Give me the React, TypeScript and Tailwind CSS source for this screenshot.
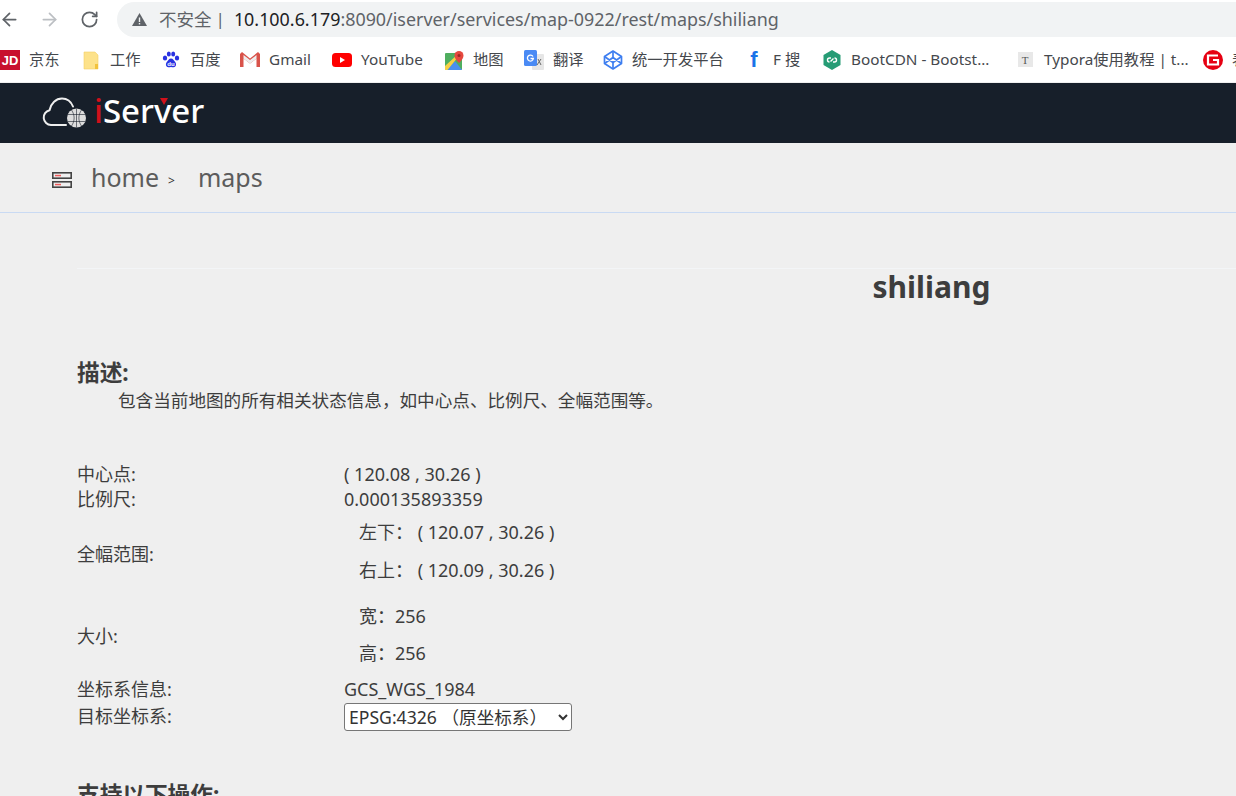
import { ArrowLeft, ArrowRight, RotateCw } from "lucide-react";
import type { ReactNode } from "react";

const font = "font-['Noto_Sans','Noto_Sans_CJK_SC',sans-serif]";

function Bookmark({ icon, label, className }: { icon: ReactNode; label: string; className: string }) {
  return (
    <div className={`flex shrink-0 items-center whitespace-nowrap ${className}`}>
      <span className="flex w-[20px] shrink-0 items-center justify-center">{icon}</span>
      <span className="ml-[9px] text-[15.3px] leading-none text-[#45484d]">{label}</span>
    </div>
  );
}

function BookmarksBar() {
  return (
    <div className="flex h-[44px] items-center overflow-hidden bg-white">
      <Bookmark
        className="w-[81px]"
        label="京东"
        icon={
          <span className="flex h-[20px] w-[20px] items-center justify-center bg-[#c8102e] font-['Liberation_Sans',sans-serif] text-[13px] font-bold leading-none text-white">
            JD
          </span>
        }
      />
      <Bookmark
        className="w-[80px]"
        label="工作"
        icon={
          <svg width="16" height="19" viewBox="0 0 16 19">
            <path d="M1 1h11l3 3v14H1z" fill="#fde28a" stroke="#f5d264" strokeWidth="0.6" />
            <rect x="12" y="13" width="3" height="5" fill="#f2c23c" />
          </svg>
        }
      />
      <Bookmark
        className="w-[79px]"
        label="百度"
        icon={
          <svg width="18" height="18" viewBox="0 0 18 18" fill="#2932e1">
            <ellipse cx="3" cy="7" rx="2.2" ry="2.6" />
            <ellipse cx="6.8" cy="3" rx="2" ry="2.6" />
            <ellipse cx="11.2" cy="3" rx="2" ry="2.6" />
            <ellipse cx="15" cy="7" rx="2.2" ry="2.6" />
            <path d="M9 7.5c2 0 3 2 4 3.2 1.6 1.6 1.6 5.3-1.4 5.6-1 .1-1.7-.4-2.6-.4s-1.6.5-2.6.4c-3-.3-3-4-1.4-5.6C6 9.5 7 7.5 9 7.5z" />
            <text x="9" y="15" textAnchor="middle" fontSize="6" fill="#fff" fontWeight="700" fontFamily="Liberation Sans">du</text>
          </svg>
        }
      />
      <Bookmark
        className="w-[92px]"
        label="Gmail"
        icon={
          <svg width="20" height="15" viewBox="0 0 20 15">
            <path d="M0 2v13h3.5V6.5L10 11.5l6.5-5V15H20V2l-2-2-8 6.5L2 0z" fill="#d9534a" />
            <path d="M3.5 6.5L10 11.5l6.5-5V3L10 8 3.5 3z" fill="#eeeeee" />
          </svg>
        }
      />
      <Bookmark
        className="w-[112px]"
        label="YouTube"
        icon={
          <svg width="20" height="14" viewBox="0 0 20 14">
            <rect width="20" height="14" rx="3.5" fill="#f00" />
            <path d="M8 4l5 3-5 3z" fill="#fff" />
          </svg>
        }
      />
      <Bookmark
        className="w-[80px]"
        label="地图"
        icon={
          <svg width="19" height="19" viewBox="0 0 19 19">
            <rect x="0" y="2" width="17" height="17" rx="1" fill="#4fae5f" />
            <path d="M2 19L10 10l7 9z" fill="#4a8ff0" />
            <path d="M0 15L12 4l1.5 1.5L2.5 19H0z" fill="#f7d046" />
            <path d="M14 0a4.5 4.5 0 0 1 4.5 4.5C18.5 8 14 12 14 12s-4.5-4-4.5-7.5A4.5 4.5 0 0 1 14 0z" fill="#e5483e" />
            <circle cx="14" cy="4.5" r="1.5" fill="#9c2a24" />
          </svg>
        }
      />
      <Bookmark
        className="w-[79px]"
        label="翻译"
        icon={
          <svg width="20" height="20" viewBox="0 0 20 20">
            <rect x="8" y="4" width="12" height="16" rx="1" fill="#e6e6e6" />
            <rect x="0" y="0" width="13" height="16" rx="1.5" fill="#4a8af4" />
            <path d="M9 6.5a3 3 0 1 0 .4 2H6.5" fill="none" stroke="#fff" strokeWidth="1.3" />
            <path d="M14 9l3 6M17 9l-4 6" stroke="#666" strokeWidth="1" />
          </svg>
        }
      />
      <Bookmark
        className="w-[141px]"
        label="统一开发平台"
        icon={
          <svg width="20" height="20" viewBox="0 0 20 20" fill="none" stroke="#3f7ff0" strokeWidth="1.7" strokeLinejoin="round">
            <path d="M10 1l8.5 5.5v7L10 19l-8.5-5.5v-7z" />
            <path d="M1.5 6.5L10 12.5l8.5-6M1.5 13.5L10 7.5l8.5 6" />
            <path d="M10 1v6.5M10 12.500V19" />
          </svg>
        }
      />
      <Bookmark
        className="w-[78px]"
        label="F 搜"
        icon={<span className="font-['Liberation_Sans',sans-serif] text-[22px] font-bold leading-none text-[#1a73e8]">f</span>}
      />
      <Bookmark
        className="w-[193px]"
        label="BootCDN - Bootst..."
        icon={
          <svg width="18" height="20" viewBox="0 0 18 20">
            <path d="M9 0l8.5 5v10L9 20 .5 15V5z" fill="#269c75" />
            <path d="M8 8H6.5a2 2 0 0 0 0 4M10 12h1.5a2 2 0 0 0 0-4M7.5 11.500l3-3" stroke="#fff" strokeWidth="1.4" fill="none" />
          </svg>
        }
      />
      <Bookmark
        className="w-[188px]"
        label="Typora使用教程 | t..."
        icon={
          <span className="flex h-[15px] w-[15px] items-center justify-center bg-[#e8e8e8] font-['Liberation_Serif',serif] text-[11px] text-[#555]">
            T
          </span>
        }
      />
      <Bookmark
        className="w-[60px]"
        label="表"
        icon={
          <svg width="20" height="20" viewBox="0 0 20 20">
            <circle cx="10" cy="10" r="10" fill="#e60012" />
            <path d="M15 5.5H5v9h10V10h-5" fill="none" stroke="#fff" strokeWidth="2.2" />
          </svg>
        }
      />
    </div>
  );
}

function BrowserChrome() {
  return (
    <div className="bg-white">
      <div className="flex h-[38px] items-center">
        <ArrowLeft className="-ml-[1px] mr-[19px] h-[21px] w-[21px] text-[#5f6368]" strokeWidth={2} />
        <ArrowRight className="mr-[20px] h-[21px] w-[21px] text-[#bcbfc3]" strokeWidth={2} />
        <RotateCw className="h-[19px] w-[19px] text-[#5f6368]" strokeWidth={2.2} />
        <div className="ml-[18px] flex h-[35px] flex-1 items-center rounded-l-full bg-[#f1f3f4] pl-[15px]">
          <svg width="15" height="13" viewBox="0 0 15 13">
            <path d="M7.5 0L15 13H0z" fill="#5f6368" />
            <rect x="6.8" y="4.5" width="1.4" height="4.5" fill="#f1f3f4" />
            <rect x="6.8" y="10" width="1.4" height="1.4" fill="#f1f3f4" />
          </svg>
          <span className="ml-[12px] text-[17.5px] text-[#5f6368]">不安全</span>
          <span className="ml-[4px] text-[17px] text-[#5f6368]">|</span>
          <span className="ml-[9px] whitespace-nowrap text-[17.9px] text-[#5f6368]">
            <span className="text-[#202124]">10.100.6.179</span>:8090/iserver/services/map-0922/rest/maps/shiliang
          </span>
        </div>
      </div>
      <BookmarksBar />
    </div>
  );
}

function Logo() {
  return (
    <div className="ml-[42px] -mt-[6px] flex items-center">
      <svg width="44" height="32" viewBox="0 0 44 32" fill="none" className="mt-[6px]">
        <path
          d="M24 28H9a7.5 7.5 0 0 1-1.5-14.800C9 6 14 1.5 20 1.5c5 0 9 3 11 8"
          stroke="#eeeeee"
          strokeWidth="2"
          strokeLinecap="round"
        />
        <circle cx="34.5" cy="21" r="9.5" fill="#dddddd" />
        <path
          d="M25.5 17.5h18M25.5 24.5h18M34.5 11.5v19M29.5 13c3.5 5 3.5 11 0 16M39.5 13c-3.5 5-3.5 11 0 16"
          stroke="#171f2a"
          strokeWidth="0.6"
        />
      </svg>
      <span className="relative ml-[8px] font-['Noto_Sans',sans-serif] text-[33px] font-medium leading-none text-white">
        <span className="text-[#d0111b]">i</span>Server
        <span className="absolute left-[66px] top-[4px] h-0 w-0 border-x-[4px] border-t-[7px] border-x-transparent border-t-[#d0111b]" />
      </span>
    </div>
  );
}

function Row({ label, children }: { label: string; children: ReactNode }) {
  return (
    <div className="flex items-center">
      <div className="w-[267px] shrink-0">{label}</div>
      <div>{children}</div>
    </div>
  );
}

export default function App() {
  return (
    <div className={`h-[796px] w-[1236px] overflow-hidden bg-[#efefef] ${font}`}>
      <BrowserChrome />
      <div className="mt-[1px] flex h-[60px] items-center bg-[#171f2a]">
        <Logo />
      </div>
      <div className="flex h-[70px] items-center border-b border-[#c9daf3] pl-[52px] text-[#5c5c5c]">
        <svg width="20" height="16" viewBox="0 0 20 16" fill="none" className="mt-[5px]">
          <rect x="0.8" y="0.8" width="18.4" height="5.4" stroke="#444" strokeWidth="1.6" />
          <rect x="0.8" y="9.8" width="18.4" height="5.4" stroke="#444" strokeWidth="1.6" />
          <rect x="3" y="2.8" width="6" height="1.5" fill="#ee5a5a" />
          <rect x="3" y="11.8" width="6" height="1.5" fill="#ee5a5a" />
        </svg>
        <span className="ml-[19px] text-[25px] leading-none">home</span>
        <span className="ml-[9px] mt-[6px] text-[12px] leading-none text-[#333]">&gt;</span>
        <span className="ml-[23px] text-[25px] leading-none">maps</span>
      </div>
      <div className="ml-[77px] w-[1709px] text-[18px] text-[#3d3d3d]">
        <div className="mt-[55px] border-t border-[#f3f5f7] text-center text-[30px] font-bold leading-[36px]">
          shiliang
        </div>
        <h3 className="mt-[54px] text-[22.67px] font-bold leading-[28px]">描述:</h3>
        <p className="pl-[41px] text-[17.6px] leading-[26px]">
          {"包含当前地图的所有相关状态信息\uFF0C如中心点、比例尺、全幅范围等。"}
        </p>
        <div className="mt-[49px] flex flex-col leading-[25px]">
          <Row label="中心点:">( 120.08 , 30.26 )</Row>
          <Row label="比例尺:">0.000135893359</Row>
          <Row label="全幅范围:">
            <div className="pl-[15px] pb-[7px] pt-[1px] leading-[38px]">
              <div>{"左下\uFF1A ( 120.07 , 30.26 )"}</div>
              <div>{"右上\uFF1A ( 120.09 , 30.26 )"}</div>
            </div>
          </Row>
          <Row label="大小:">
            <div className="pl-[15px] pb-[5px] pt-[2px] leading-[37px]">
              <div>{"宽\uFF1A256"}</div>
              <div>{"高\uFF1A256"}</div>
            </div>
          </Row>
          <Row label="坐标系信息:">GCS_WGS_1984</Row>
          <Row label="目标坐标系:">
            <select className="mt-[1px] block h-[28px] w-[228px] rounded-[3px] border border-[#767676] bg-white text-[17.6px] leading-none text-[#333]">
              <option>{"EPSG:4326 \uFF08原坐标系\uFF09"}</option>
            </select>
          </Row>
        </div>
        <h3 className="mt-[50px] text-[22.67px] font-bold leading-[28px]">支持以下操作:</h3>
      </div>
    </div>
  );
}
